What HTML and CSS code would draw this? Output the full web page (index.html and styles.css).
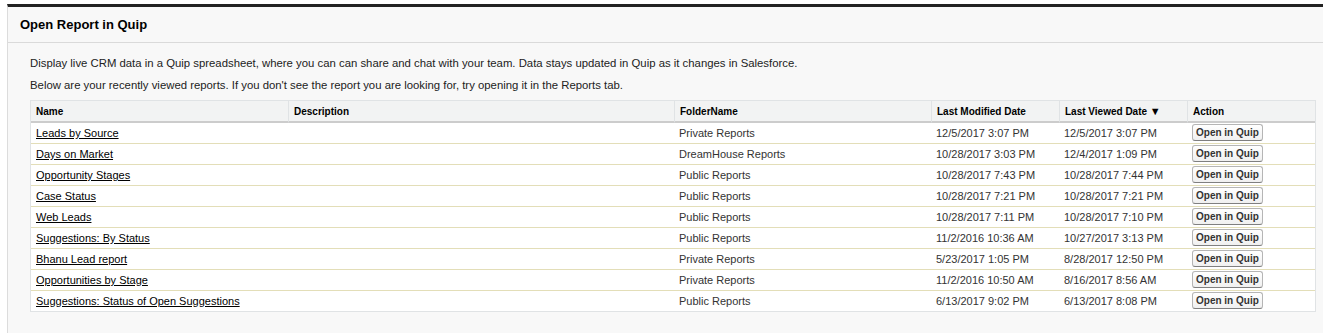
FILE: index.html
```html
<!DOCTYPE html>
<html lang="en">
<head>
    <meta charset="UTF-8">
    <meta name="viewport" content="width=device-width, initial-scale=1.0">
    <title>Open Report in Quip</title>
    <link rel="stylesheet" href="styles.css">
</head>
<body>
  <div class="panel">
      <div class="panel-header">
          <h2 class="panel-title">Open Report in Quip</h2>
      </div>
      <div class="panel-body">
          <p class="intro">Display live CRM data in a Quip spreadsheet, where you can can share and chat with your team. Data stays updated in Quip as it changes in Salesforce.</p>
          <p class="intro">Below are your recently viewed reports. If you don't see the report you are looking for, try opening it in the Reports tab.</p>

          <table class="report-list">
              <colgroup>
                  <col style="width: 257px">
                  <col style="width: 386px">
                  <col style="width: 257px">
                  <col style="width: 128px">
                  <col style="width: 128px">
                  <col>
              </colgroup>
              <thead>
                  <tr>
                      <th>Name</th>
                      <th>Description</th>
                      <th>FolderName</th>
                      <th>Last Modified Date</th>
                      <th>Last Viewed Date <span class="sort">&#9660;</span></th>
                      <th>Action</th>
                  </tr>
              </thead>
              <tbody>
                  <tr>
                      <td><a href="#">Leads by Source</a></td><td></td>
                      <td>Private Reports</td><td>12/5/2017 3:07 PM</td><td>12/5/2017 3:07 PM</td>
                      <td><button class="btn">Open in Quip</button></td>
                  </tr>
                  <tr>
                      <td><a href="#">Days on Market</a></td><td></td>
                      <td>DreamHouse Reports</td><td>10/28/2017 3:03 PM</td><td>12/4/2017 1:09 PM</td>
                      <td><button class="btn">Open in Quip</button></td>
                  </tr>
                  <tr>
                      <td><a href="#">Opportunity Stages</a></td><td></td>
                      <td>Public Reports</td><td>10/28/2017 7:43 PM</td><td>10/28/2017 7:44 PM</td>
                      <td><button class="btn">Open in Quip</button></td>
                  </tr>
                  <tr>
                      <td><a href="#">Case Status</a></td><td></td>
                      <td>Public Reports</td><td>10/28/2017 7:21 PM</td><td>10/28/2017 7:21 PM</td>
                      <td><button class="btn">Open in Quip</button></td>
                  </tr>
                  <tr>
                      <td><a href="#">Web Leads</a></td><td></td>
                      <td>Public Reports</td><td>10/28/2017 7:11 PM</td><td>10/28/2017 7:10 PM</td>
                      <td><button class="btn">Open in Quip</button></td>
                  </tr>
                  <tr>
                      <td><a href="#">Suggestions: By Status</a></td><td></td>
                      <td>Public Reports</td><td>11/2/2016 10:36 AM</td><td>10/27/2017 3:13 PM</td>
                      <td><button class="btn">Open in Quip</button></td>
                  </tr>
                  <tr>
                      <td><a href="#">Bhanu Lead report</a></td><td></td>
                      <td>Private Reports</td><td>5/23/2017 1:05 PM</td><td>8/28/2017 12:50 PM</td>
                      <td><button class="btn">Open in Quip</button></td>
                  </tr>
                  <tr>
                      <td><a href="#">Opportunities by Stage</a></td><td></td>
                      <td>Private Reports</td><td>11/2/2016 10:50 AM</td><td>8/16/2017 8:56 AM</td>
                      <td><button class="btn">Open in Quip</button></td>
                  </tr>
                  <tr>
                      <td><a href="#">Suggestions: Status of Open Suggestions</a></td><td></td>
                      <td>Public Reports</td><td>6/13/2017 9:02 PM</td><td>6/13/2017 8:08 PM</td>
                      <td><button class="btn">Open in Quip</button></td>
                  </tr>
              </tbody>
          </table>
      </div>
  </div>
</body>
</html>
```

FILE: styles.css
```css
html, body { height: 100%; }
body { font-family: "Liberation Sans", Arial, sans-serif; background-color: #fff; color: #333; margin: 0; padding: 0; }
.panel { box-sizing: border-box; min-height: calc(100% - 4px); margin: 4px 0 0 7px; border-top: 3px solid #222; border-left: 1px solid #dcdcdc; background-color: #f8f8f8; }
.panel-header { height: 35px; padding: 0 12px; border-bottom: 1px solid #dadada; display: flex; align-items: center; }
.panel-title { margin: 0; font-size: 13px; font-weight: bold; color: #000; }
.panel-body { padding: 12px 7px 20px 22px; }
.intro { margin: 0 0 6px; font-size: 11.35px; line-height: 16px; color: #222; }
.report-list { width: 100%; margin-top: 7px; table-layout: fixed; border-collapse: separate; border-spacing: 0; border: 1px solid #e0e3e5; background-color: #fff; }
.report-list th { padding: 1px 5px 0; height: 19px; line-height: 19px; font-size: 10px; font-weight: bold; color: #000; text-align: left; background-color: #f2f3f3; border-bottom: 2px solid #cccccc; white-space: nowrap; }
.report-list th + th { border-left: 1px solid #e0e3e5; }
.report-list td { padding: 0 5px; height: 20px; line-height: 20px; font-size: 11px; color: #333; border-bottom: 1px solid #e3deb8; white-space: nowrap; overflow: hidden; }
.report-list tbody tr:last-child td { border-bottom: none; }
.report-list a { color: #000; text-decoration: underline; }
.sort { font-size: 11px; }
.btn { height: 17px; margin-top: 1px; padding: 0 3px; font-family: "Liberation Sans", Arial, sans-serif; font-size: 10px; font-weight: bold; color: #333; background: linear-gradient(#fff, #f0f0f0); border: 1px solid #b5b5b5; border-bottom-color: #7f7f7f; border-radius: 3px; vertical-align: top; cursor: pointer; }
```
